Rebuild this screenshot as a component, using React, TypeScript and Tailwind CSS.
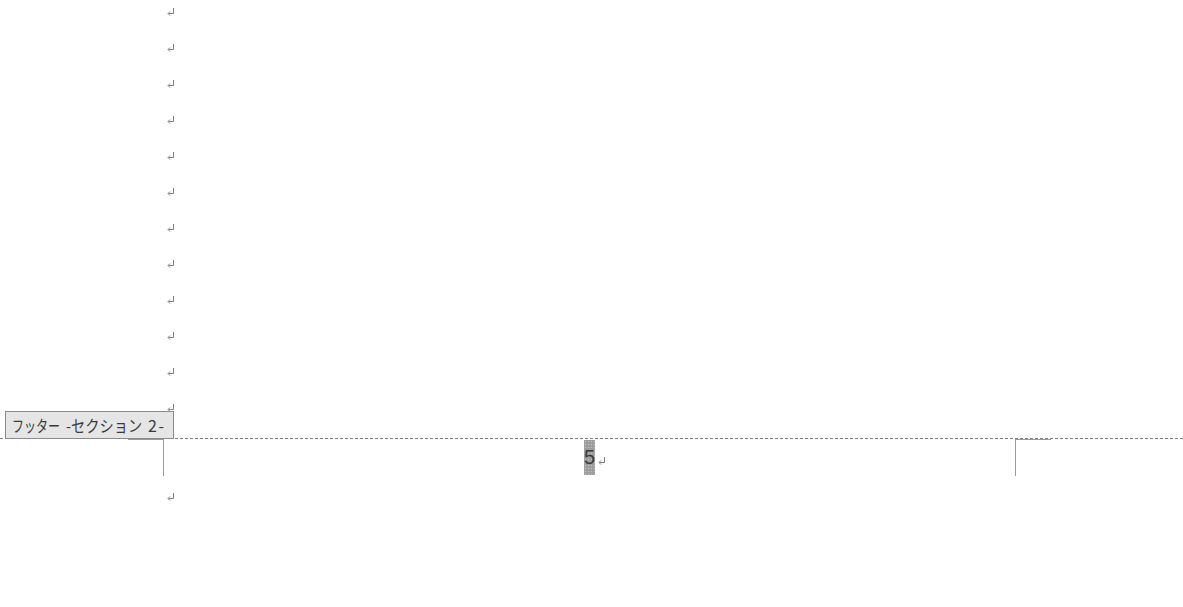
import React from 'react'

function Mark() {
  // paragraph mark ↵ as drawn by the editor
  return (
    <svg width="8" height="8" viewBox="0 0 8 8" fill="none" stroke="#7f7f7f" strokeWidth="1">
      <path d="M6.5 0 V5.5 H1.5" />
      <path d="M3 3.5 L1 5.5 L3 7.5" />
    </svg>
  )
}

export default function App() {
  const rows = Array.from({ length: 12 })
  return (
    <div className="w-[1183px] h-[607px] bg-white overflow-hidden" style={{ fontFamily: '"Liberation Sans", "Noto Sans CJK JP", sans-serif' }}>
      {/* body paragraphs */}
      <div className="relative h-[438px]">
        <div className="flex flex-col pl-[167px]">
          {rows.map((_, i) => (
            <div key={i} className="h-[36px] pt-[8px]">
              <Mark />
            </div>
          ))}
        </div>

        {/* footer tag */}
        <div
          className="absolute left-[5px] top-[411px] h-[28px] w-[169px] bg-[#e5e5e5] border border-[#8a8a8a] flex items-center gap-[6px] pl-[6px] pb-[1px] text-[16px] leading-none text-[#3a3a3a] whitespace-nowrap"
          style={{ fontFamily: '"Noto Sans CJK JP", sans-serif' }}
        >
          <span className="w-[48px] shrink-0">
            <span className="inline-block origin-left scale-x-[0.75]">フッター</span>
          </span>
          <span className="w-[76px] shrink-0">
            <span className="inline-block origin-left scale-x-[0.89]">-セクション</span>
          </span>
          <span className="pl-[-2px] tracking-[1.5px]">2-</span>
        </div>
      </div>

      {/* section boundary */}
      <div className="h-px w-full bg-[linear-gradient(to_right,#7f7f7f_3px,transparent_3px)] bg-[length:5px_1px]" />

      {/* footer */}
      <div className="flex h-[37px]">
        <div className="w-[128px] shrink-0" />
        <div className="w-[36px] h-[37px] shrink-0 border-t border-r border-[#9a9a9a]" />
        <div className="w-[851px] shrink-0 flex pl-[420px] pt-[1px]">
          <span className="h-[35px] w-[11px] bg-[#9e9e9e] bg-[radial-gradient(#c4c4c4_0.6px,transparent_0.7px)] bg-[length:3px_3px] text-[20px] leading-[35px] text-[#3c3c3c] flex justify-center">5</span>
          <span className="pt-[17px] pl-[3px]">
            <Mark />
          </span>
        </div>
        <div className="w-[36px] h-[37px] shrink-0 border-t border-l border-[#9a9a9a]" />
      </div>

      <div className="pl-[167px] pt-[17px]">
        <Mark />
      </div>
    </div>
  )
}
